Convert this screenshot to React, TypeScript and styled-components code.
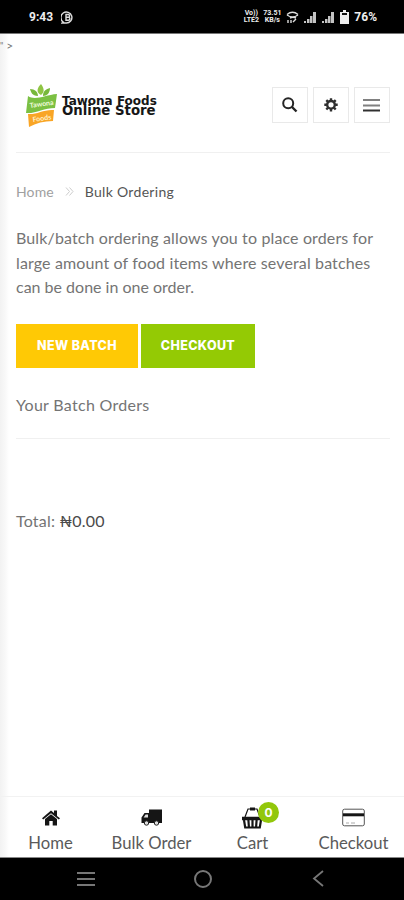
import React from 'react';
import styled, { createGlobalStyle } from 'styled-components';

const GlobalStyle = createGlobalStyle`
  * { box-sizing: border-box; }
  body { margin: 0; background: #fff; font-family: Lato, sans-serif; }
`;

const Phone = styled.div`
  width: 404px;
  height: 900px;
  display: flex;
  flex-direction: column;
  overflow: hidden;
  background: #fff;
`;

const StatusBar = styled.header`
  height: 34px;
  flex: none;
  background: #000;
  border-bottom: 1px solid #777;
  color: #eee;
  display: flex;
  align-items: center;
  justify-content: space-between;
  padding: 1px 27px 0 29px;
  font: 700 12px/16px Roboto, sans-serif;
`;

const StatusGroup = styled.div<{ $gap: number }>`
  display: flex;
  align-items: center;
  gap: ${(p) => p.$gap}px;
`;

const TinyStack = styled.div<{ $width: number }>`
  width: ${(p) => p.$width}px;
  display: flex;
  flex-direction: column;
  align-items: center;
  white-space: nowrap;
  font: 700 7px/7px Roboto, sans-serif;
`;

const Page = styled.main`
  flex: 1;
  display: flex;
  flex-direction: column;
  background: linear-gradient(to right, #f2f2f2 0, #f8f8f8 5px, #fff 9px);
`;

const StrayText = styled.div`
  height: 40px;
  display: flex;
  color: #777;
  font-size: 13px;
  line-height: 24px;
  gap: 3px;
`;

const StrayMark = styled.span<{ $size: number }>`
  font-size: ${(p) => p.$size}px;
`;

const Content = styled.div`
  flex: 1;
  padding: 0 14px 0 16px;
  color: #747474;
`;

const Header = styled.div`
  height: 79px;
  display: flex;
  justify-content: space-between;
  align-items: flex-start;
  border-bottom: 1px solid #f0f0f0;
`;

const Brand = styled.div`
  display: flex;
  gap: 5px;
  padding: 10px 0 0 9px;
`;

const BrandName = styled.div`
  padding-top: 13px;
  color: #161616;
  font: 700 12px/9px "DejaVu Sans", sans-serif;
  white-space: nowrap;
`;

const BrandLine = styled.div<{ $size: number }>`
  font-size: ${(p) => p.$size}px;
`;

const Tools = styled.div`
  display: flex;
  gap: 5px;
  padding-top: 13px;
`;

const ToolButton = styled.button`
  width: 36px;
  height: 36px;
  padding: 0;
  display: grid;
  place-items: center;
  background: #fff;
  border: 1px solid #e9e9e9;
`;

const Breadcrumb = styled.nav`
  height: 20px;
  margin-top: 28px;
  display: flex;
  align-items: center;
  font-size: 14px;
  letter-spacing: 0.12px;
  color: #a0a0a0;
`;

const Separator = styled.span`
  display: flex;
  width: 31px;
  padding-left: 11px;
`;

const Current = styled.span`
  color: #555;
  letter-spacing: 0.3px;
`;

const Intro = styled.p`
  margin: 25px 0 0;
  font-size: 16px;
  line-height: 24.7px;
  letter-spacing: 0.13px;
  white-space: nowrap;
`;

const Closing = styled.span`
  letter-spacing: 0;
`;

const Actions = styled.div`
  display: flex;
  gap: 3px;
  margin-top: 24px;
`;

const ActionButton = styled.button<{ $color: string; $width: number }>`
  width: ${(p) => p.$width}px;
  height: 44px;
  padding: 0;
  border: 0;
  color: #fff;
  background: ${(p) => p.$color};
  font: 800 12.5px/20px Inter, sans-serif;
  letter-spacing: 0.35px;
`;

const SectionTitle = styled.h2`
  height: 71px;
  margin: 0;
  padding-top: 25px;
  border-bottom: 1px solid #f0f0f0;
  font-size: 16px;
  line-height: 24px;
  font-weight: 400;
  letter-spacing: 0.3px;
`;

const Total = styled.p`
  margin: 70px 0 0;
  font-size: 16px;
  line-height: 24px;
  letter-spacing: 0.2px;
`;

const Amount = styled.span`
  color: #4a4a4a;
`;

const Tabs = styled.nav`
  height: 61px;
  border-top: 1px solid #f2f2f2;
  display: grid;
  grid-template-columns: repeat(4, 101px);
`;

const Tab = styled.a`
  display: flex;
  flex-direction: column;
  align-items: center;
  padding-top: 8px;
  color: #5a5a5a;
  font-size: 16.7px;
  line-height: 26px;
  white-space: nowrap;
`;

const TabIcon = styled.span`
  position: relative;
  height: 25px;
  display: flex;
  align-items: center;
  color: #151515;
`;

const Badge = styled.span`
  position: absolute;
  left: 17px;
  top: -3px;
  width: 21px;
  height: 21px;
  border-radius: 50%;
  background: #92c70b;
  color: #fff;
  font: 700 12px/21px Inter, sans-serif;
  text-align: center;
`;

const SystemNav = styled.footer`
  height: 43px;
  flex: none;
  background: #000;
  border-top: 1px solid #888;
  display: flex;
  align-items: center;
  justify-content: space-between;
  padding: 0 80px 1px 76px;
`;

const NavShape = styled.svg<{ $shift?: number }>`
  margin-left: ${(p) => p.$shift ?? 0}px;
`;

const SignalIcon = () => (
  <svg width="13" height="13" viewBox="0 0 13 13" fill="#c4c4c4">
    <path d="M0 10h2v2H0zM3 8h2.5v4H3zM6 5h2.5v7H6zM9 1h3v11H9z" />
  </svg>
);

const LogoMark = () => (
  <svg width="32" height="43" viewBox="0 0 32 43">
    <path d="M16 11C10 8 13 3 16 0c3 4 4 8 0 11Z" fill="#8fc544" />
    <path d="M13 12C7 12 6 8 5 5c5 0 8 3 8 7ZM18 12c0-5 3-7 7-8 0 5-3 8-7 8Z" fill="#77b83b" />
    <path d="M3 12c7 5 17-1 29-2l-2 14c-11 0-20 6-29 5Z" fill="#7bc043" />
    <path d="M3 30c8 1 16-5 26-4l-1 11c-9 0-17 2-24 6Z" fill="#f9a526" />
    <text x="5" y="24" fill="#effbdc" fontFamily="Lato, sans-serif" fontWeight="700" fontSize="7" transform="rotate(-8 5 24)">Tawona</text>
    <text x="8" y="38" fill="#fff0c8" fontFamily="Lato, sans-serif" fontWeight="700" fontSize="7" transform="rotate(-8 8 38)">Foods</text>
  </svg>
);

const SearchIcon = () => (
  <svg width="16" height="16" viewBox="0 0 16 16" fill="none" stroke="#252525">
    <circle cx="6.2" cy="6.2" r="5" strokeWidth="2" />
    <path d="m10 10 4.5 4.5" strokeWidth="2.4" />
  </svg>
);

const GearIcon = () => (
  <svg width="15" height="15" viewBox="0 0 15 15" fill="none" stroke="#303030">
    <circle cx="7" cy="6.8" r="3.8" strokeWidth="2.4" />
    <path d="M7 .2v2.5m0 8.2v2.6M.3 6.8h2.6m8.2 0h2.6M2.3 2.1l1.8 1.8m5.8 5.8 1.8 1.8m0-9.4L9.9 3.9M4.1 9.7l-1.8 1.8" strokeWidth="2.4" />
  </svg>
);

const MenuIcon = () => (
  <svg width="18" height="14" viewBox="0 0 18 14">
    <path d="M0 2h17M0 7.5h17" stroke="#808080" strokeWidth="2" />
    <path d="M0 12.5h17" stroke="#303030" strokeWidth="2" />
  </svg>
);

const HomeIcon = () => (
  <svg width="20" height="16" viewBox="0 0 20 16" fill="currentColor">
    <path d="M1 8.3 10 .5l3 2.5V.5h3V6l3 2.3-1.2 1.3L10 3.3 2.2 9.6Z" />
    <path d="m4 9.1 6-4.9 6 4.9v6.4h-4.3V11H8.3v4.5H4Z" />
  </svg>
);

const TruckIcon = () => (
  <svg width="21" height="17" viewBox="0 0 21 17">
    <path d="M8 .5h13V14H.5V8.5L3.5 4H8Z" fill="currentColor" />
    <path d="M2.6 8.5 4.6 5.4H7v3.1Z" fill="#ddd" />
    <circle cx="5.5" cy="14" r="2.2" fill="#ddd" stroke="#222" />
    <circle cx="15.5" cy="14" r="2.2" fill="#ddd" stroke="#222" />
  </svg>
);

const BasketIcon = () => (
  <svg width="23" height="22" viewBox="0 0 23 22" fill="none" stroke="currentColor">
    <path d="m4 10 3-8h9l3 8" strokeWidth="1.2" />
    <path d="M9 2h5" strokeWidth="3" />
    <path d="M1 11.5h21" strokeWidth="3.5" />
    <path d="m3 13 1.2 7.5h14.6L20 13M7.4 13l.5 7m3.6-7v7m4.1-7-.5 7" strokeWidth="2.2" />
  </svg>
);

const CardIcon = () => (
  <svg width="23" height="19" viewBox="0 0 23 19" fill="none" stroke="currentColor">
    <rect x=".7" y="1.2" width="21.6" height="16.6" rx="1.8" stroke="#555" />
    <path d="M1 6.8h21" strokeWidth="3" />
    <path d="M4 15h3m2 0h4" stroke="#aaa" />
  </svg>
);

export default function App() {
  return (
    <>
      <GlobalStyle />
      <Phone>
        <StatusBar>
          <StatusGroup $gap={8}>
            <span>9:43</span>
            <svg width="13" height="13" viewBox="0 0 13 13" fill="none" stroke="#ddd" strokeWidth="1.4">
              <path d="M2.2 11A5.5 5.5 0 1 1 5 12L1 12Z" />
              <path d="M5 3.5h2.2a1.4 1.4 0 0 1 0 2.8H5Zm0 2.8h2.4a1.5 1.5 0 0 1 0 3H5Z" />
            </svg>
          </StatusGroup>
          <StatusGroup $gap={5}>
            <TinyStack $width={14}><span>Vo))</span><span>LTE2</span></TinyStack>
            <TinyStack $width={18}><span>73.51</span><span>KB/s</span></TinyStack>
            <svg width="13" height="13" viewBox="0 0 13 13" fill="none" stroke="#ddd" strokeWidth="1.4">
              <path d="M1 3.5Q6.5-1 12 3.5M1 4q5.5 4 11 0M4 7q3-1.5 6 0M2 9v3m3-3v3m2-1 3-3" />
            </svg>
            <SignalIcon />
            <SignalIcon />
            <svg width="9" height="14" viewBox="0 0 9 14">
              <path d="M3 0h3v2h3v12H0V2h3Z" fill="#eee" />
              <path d="M2 4h5" stroke="#111" strokeWidth="2" />
            </svg>
            <span>76%</span>
          </StatusGroup>
        </StatusBar>
        <Page>
          <StrayText><StrayMark $size={9}>"</StrayMark><StrayMark $size={12}>&gt;</StrayMark></StrayText>
          <Content>
            <Header>
              <Brand>
                <LogoMark />
                <BrandName>
                  <BrandLine $size={12}>Tawona Foods</BrandLine>
                  <BrandLine $size={13.3}>Online Store</BrandLine>
                </BrandName>
              </Brand>
              <Tools>
                <ToolButton aria-label="Search"><SearchIcon /></ToolButton>
                <ToolButton aria-label="Settings"><GearIcon /></ToolButton>
                <ToolButton aria-label="Menu"><MenuIcon /></ToolButton>
              </Tools>
            </Header>
            <Breadcrumb>
              <span>Home</span>
              <Separator>
                <svg width="9" height="9" viewBox="0 0 9 9" fill="none" stroke="#ccc">
                  <path d="m1 .5 3.5 4L1 8.5m3.5-8L8 4.5l-3.5 4" />
                </svg>
              </Separator>
              <Current>Bulk Ordering</Current>
            </Breadcrumb>
            <Intro>
              Bulk/batch ordering allows you to place orders for<br />
              large amount of food items where several batches<br />
              <Closing>can be done in one order.</Closing>
            </Intro>
            <Actions>
              <ActionButton $color="#ffc905" $width={122}>NEW BATCH</ActionButton>
              <ActionButton $color="#94ca04" $width={114}>CHECKOUT</ActionButton>
            </Actions>
            <SectionTitle>Your Batch Orders</SectionTitle>
            <Total>Total: <Amount>₦0.00</Amount></Total>
          </Content>
          <Tabs>
            <Tab><TabIcon><HomeIcon /></TabIcon>Home</Tab>
            <Tab><TabIcon><TruckIcon /></TabIcon>Bulk Order</Tab>
            <Tab><TabIcon><BasketIcon /><Badge>0</Badge></TabIcon>Cart</Tab>
            <Tab><TabIcon><CardIcon /></TabIcon>Checkout</Tab>
          </Tabs>
        </Page>
        <SystemNav>
          <NavShape width="20" height="16" viewBox="0 0 20 16" stroke="#777" strokeWidth="2">
            <path d="M1 2h18M1 8h18M1 14h18" />
          </NavShape>
          <NavShape $shift={-2} width="20" height="20" viewBox="0 0 20 20" fill="none" stroke="#777" strokeWidth="2">
            <circle cx="10" cy="10" r="8" />
          </NavShape>
          <NavShape width="12" height="17" viewBox="0 0 12 17" fill="none" stroke="#777" strokeWidth="1.8">
            <path d="m11 1-9 7.5 9 7.5" />
          </NavShape>
        </SystemNav>
      </Phone>
    </>
  );
}
